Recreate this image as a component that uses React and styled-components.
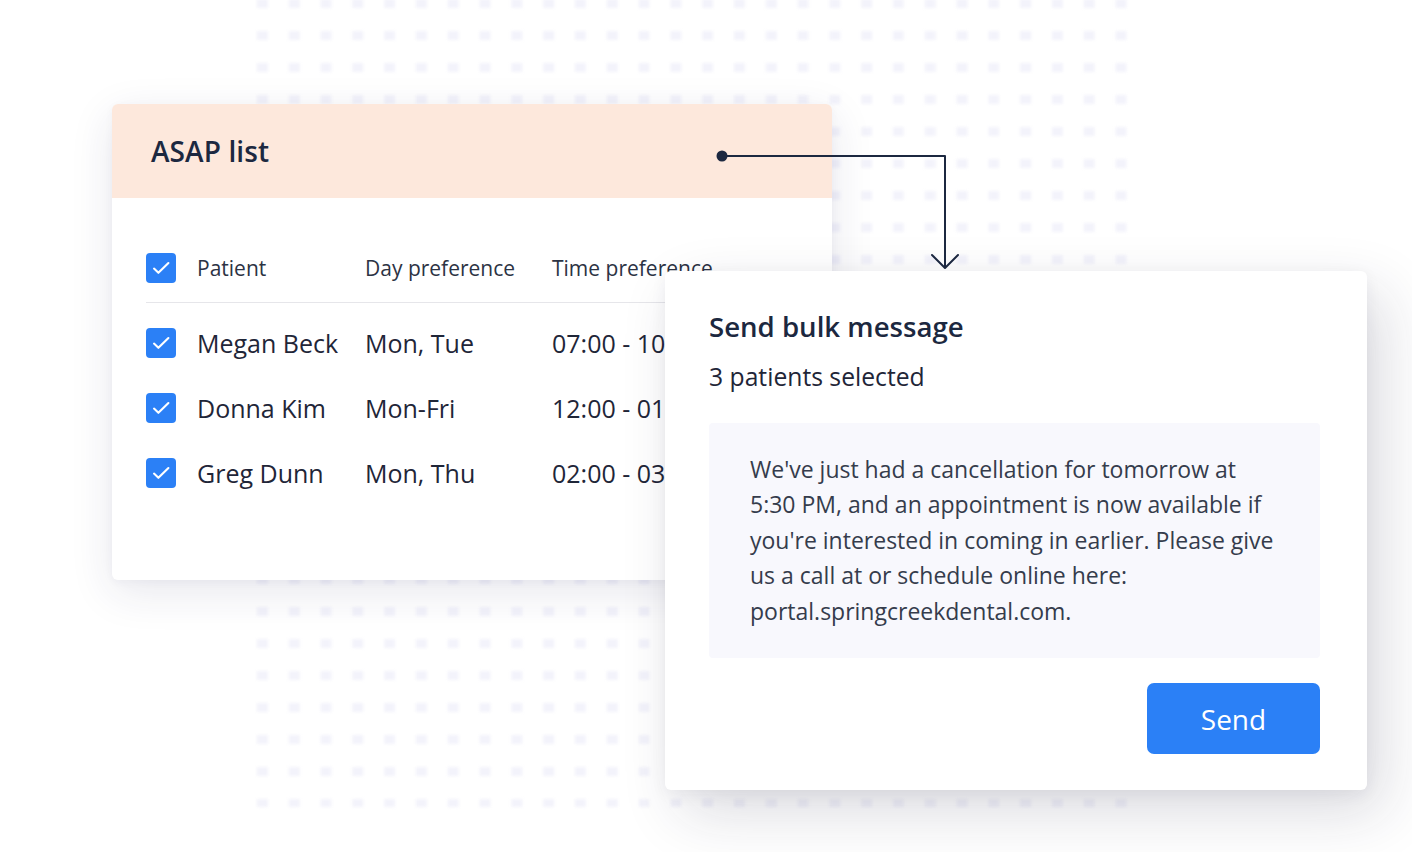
import styled, { createGlobalStyle } from "styled-components";

const GlobalStyle = createGlobalStyle`
  html, body {
    margin: 0;
    padding: 0;
    background: #ffffff;
  }
  body {
    font-family: "Open Sans", "Noto Sans", sans-serif;
    color: #1f2638;
    overflow: hidden;
  }
`;

const patients = [
  { name: "Megan Beck", days: "Mon, Tue", time: "07:00 - 10:00" },
  { name: "Donna Kim", days: "Mon-Fri", time: "12:00 - 01:00" },
  { name: "Greg Dunn", days: "Mon, Thu", time: "02:00 - 03:00" },
];

const CheckIcon = () => (
  <svg width="30" height="30" viewBox="0 0 30 30" fill="none">
    <path d="M8 15.6 L12.4 19.8 L22.4 10" stroke="#fff" strokeWidth="2.1" strokeLinecap="round" strokeLinejoin="round" />
  </svg>
);

const Connector = () => (
  <ConnectorSvg width="1412" height="852" viewBox="0 0 1412 852">
    <circle cx="722" cy="156" r="5.5" fill="#1c2840" />
    <path d="M722 156 H945 V267" stroke="#1c2840" strokeWidth="2" fill="none" strokeLinejoin="round" />
    <path d="M932 255 L945 268 L958 255" stroke="#1c2840" strokeWidth="2" fill="none" strokeLinecap="round" strokeLinejoin="round" />
  </ConnectorSvg>
);

const App = () => {
  return (
    <>
      <GlobalStyle />
      <Stage>
        <Dots />
        <ListCard>
          <ListHeader>
            <h1>ASAP list</h1>
          </ListHeader>
          <ListBody>
            <HeadRow>
              <Checkbox><CheckIcon /></Checkbox>
              <span>Patient</span>
              <span>Day preference</span>
              <span>Time preference</span>
            </HeadRow>
            <Rows>
              {patients.map((p) => (
                <Row key={p.name}>
                  <Checkbox><CheckIcon /></Checkbox>
                  <span>{p.name}</span>
                  <span>{p.days}</span>
                  <span>{p.time}</span>
                </Row>
              ))}
            </Rows>
          </ListBody>
        </ListCard>

        <Modal>
          <ModalTitle>Send bulk message</ModalTitle>
          <ModalSub>3 patients selected</ModalSub>
          <MessageBox>
            We've just had a cancellation for tomorrow at<br />
            5:30 PM, and an appointment is now available if<br />
            you're interested in coming in earlier. Please give<br />
            us a call at or schedule online here:<br />
            portal.springcreekdental.com.
          </MessageBox>
          <Actions>
            <SendButton>Send</SendButton>
          </Actions>
        </Modal>

        <Connector />
      </Stage>
    </>
  );
};

const Stage = styled.main`
  position: relative;
  width: 1412px;
  height: 852px;
  padding: 104px 0 0 112px;
  box-sizing: border-box;
  overflow: hidden;
`;

const Dots = styled.div`
  position: absolute;
  left: 254px;
  top: -5px;
  width: 878px;
  height: 812px;
  background-image: linear-gradient(
      to right,
      transparent 0,
      transparent 11px,
      #ffffff 11px
    ),
    linear-gradient(
      to bottom,
      rgba(205, 205, 238, 0.24) 0,
      rgba(205, 205, 238, 0.24) 9px,
      transparent 9px
    );
  background-size: 31.8px 32px;
  background-position: 3px 4px;
  filter: blur(1.6px);
  z-index: 0;
`;

const ListCard = styled.section`
  position: relative;
  z-index: 1;
  width: 720px;
  height: 476px;
  background: #ffffff;
  border-radius: 6px;
  box-shadow: 0 12px 44px rgba(40, 40, 90, 0.11), 0 2px 8px rgba(40, 40, 90, 0.04);
  overflow: hidden;
`;

const ListHeader = styled.header`
  height: 94px;
  background: #fde8dc;
  display: flex;
  align-items: center;
  padding-left: 39px;

  h1 {
    margin: 0;
    font-size: 28px;
    font-weight: 600;
    color: #1c2840;
    letter-spacing: 0.1px;
  }
`;

const ListBody = styled.div`
  padding: 35px 34px 0 34px;
`;

const HeadRow = styled.div`
  display: grid;
  grid-template-columns: 51px 168px 187px 1fr;
  align-items: center;
  height: 69px;
  border-bottom: 1px solid #e6e6ea;
  font-size: 21px;
  color: #2c3344;
  white-space: nowrap;
`;

const Rows = styled.div`
  padding-top: 7px;
`;

const Row = styled.div`
  display: grid;
  grid-template-columns: 51px 168px 187px 1fr;
  align-items: center;
  height: 65.3px;
  font-size: 25px;
  color: #1f2638;
  white-space: nowrap;
`;

const Checkbox = styled.span`
  width: 30px;
  height: 30px;
  border-radius: 4px;
  background: #2b80f6;
  display: flex;
  align-items: center;
  justify-content: center;
`;

const Modal = styled.section`
  position: absolute;
  z-index: 2;
  left: 665px;
  top: 271px;
  width: 702px;
  height: 519px;
  box-sizing: border-box;
  padding: 36px 47px 0 44px;
  background: #ffffff;
  border-radius: 6px;
  box-shadow: 16px 22px 60px rgba(30, 30, 60, 0.16), 0 4px 16px rgba(30, 30, 60, 0.06);
  display: flex;
  flex-direction: column;
`;

const ModalTitle = styled.h2`
  margin: 0;
  font-size: 27.6px;
  line-height: 38px;
  font-weight: 600;
  color: #1c2840;
`;

const ModalSub = styled.p`
  margin: 15px 0 0;
  font-size: 24.7px;
  line-height: 34px;
  color: #1f2638;
`;

const MessageBox = styled.div`
  margin-top: 29px;
  height: 235px;
  box-sizing: border-box;
  padding: 29px 20px 0 41px;
  background: #f8f8fd;
  border-radius: 4px;
  font-size: 23px;
  line-height: 35.4px;
  color: #353c4c;
  white-space: nowrap;
`;

const Actions = styled.div`
  display: flex;
  justify-content: flex-end;
  margin-top: 25px;
`;

const SendButton = styled.button`
  width: 173px;
  height: 71px;
  border: none;
  border-radius: 7px;
  background: #2b80f6;
  color: #ffffff;
  font-family: "Open Sans", "Noto Sans", sans-serif;
  font-size: 28px;
  font-weight: 500;
  cursor: pointer;
`;

const ConnectorSvg = styled.svg`
  position: absolute;
  left: 0;
  top: 0;
  z-index: 3;
  pointer-events: none;
`;

export default App;
